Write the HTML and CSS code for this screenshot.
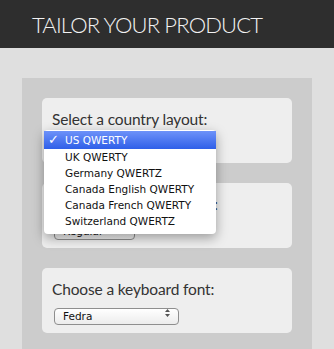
FILE: index.html
```html
<!DOCTYPE html>
<html>
  <head>
    <meta name="viewport" content="width=device-width,initial-scale=1.0">
    <title>Tailor your product</title>
    <link rel="stylesheet" href="styles.css">
  </head>
  <body>
    <header class="topbar">
      <h1>TAILOR YOUR PRODUCT</h1>
    </header>
    <main class="page">
      <section class="panel">
        <!-- country layout, menu is shown open -->
        <div class="card card-open">
          <label class="card-label" for="country">Select a country layout:</label>
          <div class="select-wrap select-country">
            <select id="country" class="select">
              <option>US QWERTY</option>
              <option>UK QWERTY</option>
              <option>Germany QWERTZ</option>
              <option>Canada English QWERTY</option>
              <option>Canada French QWERTY</option>
              <option>Switzerland QWERTZ</option>
            </select>
          </div>
          <ul class="menu">
            <li class="menu-item active"><span class="check">&#10003;</span>US QWERTY</li>
            <li class="menu-item">UK QWERTY</li>
            <li class="menu-item">Germany QWERTZ</li>
            <li class="menu-item">Canada English QWERTY</li>
            <li class="menu-item">Canada French QWERTY</li>
            <li class="menu-item">Switzerland QWERTZ</li>
          </ul>
        </div>

        <div class="card">
          <label class="card-label" for="layout">Select a keyboard layout:</label>
          <div class="select-wrap select-short">
            <select id="layout" class="select">
              <option>Regular</option>
            </select>
            <svg class="arrows" width="5" height="8" viewBox="0 0 5 8"><path d="M0 3 L2.5 0 L5 3 Z M0 5 L2.5 8 L5 5 Z" fill="#555"/></svg>
          </div>
        </div>

        <div class="card">
          <label class="card-label" for="font">Choose a keyboard font:</label>
          <div class="select-wrap select-font">
            <select id="font" class="select">
              <option>Fedra</option>
            </select>
            <svg class="arrows" width="5" height="8" viewBox="0 0 5 8"><path d="M0 3 L2.5 0 L5 3 Z M0 5 L2.5 8 L5 5 Z" fill="#555"/></svg>
          </div>
        </div>
      </section>
    </main>
  </body>
</html>
```

FILE: styles.css
```css
body { margin: 0; background: #dfdfdf; font-family: Lato, "Open Sans", sans-serif; }

.topbar { background: #2e2e2e; height: 48px; padding: 0 0 0 32px; display: flex; align-items: center; }
.topbar h1 { margin: 0; color: #f2f2f2; font-size: 22px; font-weight: 300; letter-spacing: -0.85px; }

.page { padding: 30px 22px 0; }
.panel { background: #cccccc; padding: 20px 20px 20px; display: flex; flex-direction: column; gap: 20px; }

.card { background: #eeeeee; border-radius: 5px; padding: 11px 10px 12px; position: relative; }
.card-label { display: block; color: #333; font-size: 15.5px; line-height: 20px; margin-bottom: 5px; letter-spacing: -0.15px; }

.select-wrap { position: relative; margin-left: 2px; height: 17px; }
.select { -webkit-appearance: none; appearance: none; height: 17px; width: 100%; box-sizing: border-box; border: 1px solid #8e8e8e; border-radius: 4px; background: linear-gradient(#ffffff, #ececec); padding: 0 0 0 8px; font-family: "DejaVu Sans", sans-serif; font-size: 10.5px; color: #111; }
.select-country { width: 160px; }
.select-short { width: 81px; }
.select-font { width: 125px; }
.arrows { position: absolute; right: 9px; top: 4.5px; }

.menu { position: absolute; left: 2px; top: 32px; width: 172px; margin: 0; padding: 1px 0 5px; list-style: none; background: #fff; border-radius: 4px; box-shadow: 0 4px 12px rgba(0, 0, 0, 0.35); z-index: 2; }
.menu-item { height: 16px; line-height: 16px; padding-left: 21px; font-family: "DejaVu Sans", sans-serif; font-size: 10.5px; color: #111; white-space: nowrap; position: relative; }
.menu-item.active { height: 18px; line-height: 18px; color: #fff; background: linear-gradient(#6d92f9, #2f5fe8); }
.check { position: absolute; left: 4px; font-size: 13px; font-weight: bold; }
```
